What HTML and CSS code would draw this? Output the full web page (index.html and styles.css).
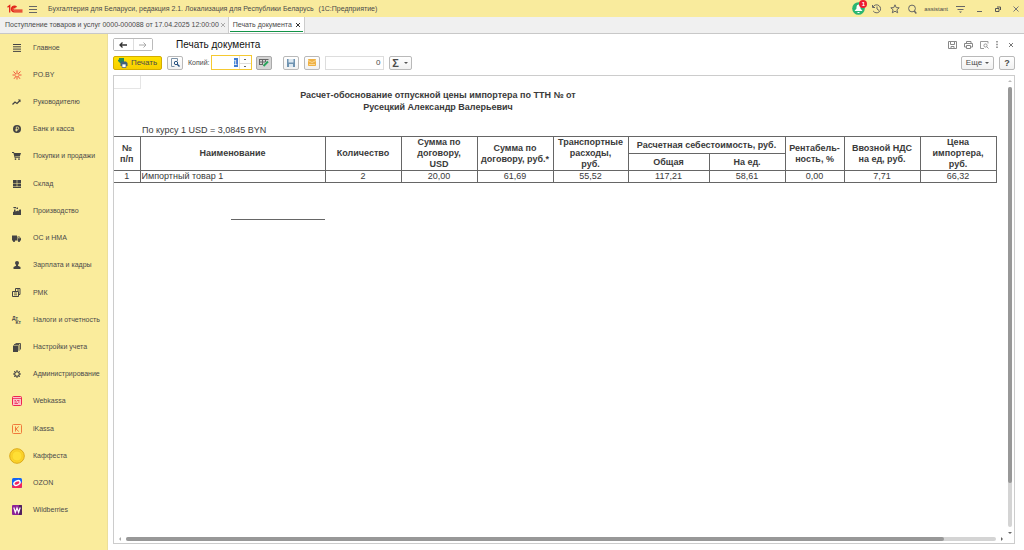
FILE: index.html
```html
<!DOCTYPE html>
<html lang="ru">
<head>
<meta charset="utf-8">
<title>Печать документа</title>
<link rel="stylesheet" href="styles.css">
</head>
<body>
<div class="app">
  <header class="titlebar">
    <svg class="logo" width="16" height="10" viewBox="0 0 16 10" fill="none" stroke="#e2231a"><path d="M.5 3.200 2.700 1.500V8.500M9.600 3.200A2.900 2.900 0 1 0 7 7.900H15.500M8.300 4.200A1.300 1.300 0 1 0 7.200 6.100H15.500" stroke-width="1.300"/></svg>
    <button class="plain menu" aria-label="Меню"><svg width="9" height="8" viewBox="0 0 9 8" stroke="#666"><path d="M0 1.500H8M0 4.500H8M0 7.500H8"/></svg></button>
    <span class="app-name">Бухгалтерия для Беларуси, редакция 2.1. Локализация для Республики Беларусь</span>
    <span class="platform">(1С:Предприятие)</span>
    <div class="title-tools">
      <button class="plain bell" aria-label="Уведомления"><svg width="13" height="13" viewBox="0 0 13 13"><circle cx="6.500" cy="6.500" r="6.300" fill="#2bb673"/><path d="M2.500 9 4.500 6.500V5Q4.500 2.500 6.500 2.500T8.500 5V6.500L10.500 9ZM5.500 10H7.500V11H5.500Z" fill="#fff"/></svg><span class="badge">1</span></button>
      <button class="plain t-history" aria-label="История"><svg width="10" height="10" viewBox="0 0 10 10" fill="none" stroke="#666"><path d="M1 3A4 4 0 1 1 1.200 7M.5 1V3.500H3M5 2.500V5L7 6.500"/></svg></button>
      <button class="plain t-star" aria-label="Избранное"><svg width="10" height="10" viewBox="0 0 10 10" fill="none" stroke="#666"><path d="m5 .8 1.200 2.800 3 .2-2.300 2 .8 3L5 7.200 2.300 8.800l.8-3L.8 3.800l3-.2Z"/></svg></button>
      <button class="plain t-search" aria-label="Поиск"><svg width="9" height="10" viewBox="0 0 9 10" fill="none" stroke="#666"><circle cx="4" cy="4.500" r="3.400"/><path d="m6.300 7 2 2.500" stroke-width="1.400"/></svg></button>
      <span class="user">assistant</span>
      <button class="plain t-set" aria-label="Настройки"><svg width="9" height="8" viewBox="0 0 9 8" stroke="#666"><path d="M0 1.500H9M1.500 4.500H7.500"/><path d="M3 6.500H6L4.500 8Z" fill="#666" stroke="none"/></svg></button>
      <button class="plain t-min" aria-label="Свернуть"><svg width="6" height="8" viewBox="0 0 6 8" stroke="#666"><path d="M0 6.500H5"/></svg></button>
      <button class="plain t-max" aria-label="Развернуть"><svg width="6" height="6" viewBox="0 0 6 6" fill="none" stroke="#555"><path d="M.5 2.500H4V5.500H.5ZM2 1H5.500V4"/></svg></button>
      <button class="plain t-close" aria-label="Закрыть"><svg width="6" height="6" viewBox="0 0 6 6" stroke="#777"><path d="m.5.5 5 5m0-5-5 5"/></svg></button>
    </div>
  </header>

  <nav class="tabs">
    <button class="tab">Поступление товаров и услуг 0000-000088 от 17.04.2025 12:00:00 <svg width="4" height="4" viewBox="0 0 4 4" stroke="#aaa"><path d="m0 0 4 4m0-4-4 4"/></svg></button>
    <button class="tab active">Печать документа <svg width="4" height="4" viewBox="0 0 4 4" stroke="#333"><path d="m0 0 4 4m0-4-4 4"/></svg></button>
  </nav>

  <div class="body">
    <nav class="sidebar">
      <a class="item" href="#"><span class="ico"><svg width="8" height="8" viewBox="0 0 8 8" stroke="#444"><path d="M0 .500H8M0 2.800H8M0 5.100H8M0 7.400H8"/></svg></span>Главное</a>
      <a class="item" href="#"><span class="ico"><svg width="10" height="10" viewBox="0 0 10 10" stroke="#f0563a"><path d="M5 .5V4M5 6V9.500M1.500 1.500 4 4.200M8.500 1.500 6 4.200M.5 5H3.800M6.200 5H9.500M2 8.800 4.200 6M8 8.800 5.800 6"/></svg></span>PO.BY</a>
      <a class="item" href="#"><span class="ico"><svg width="9" height="7" viewBox="0 0 9 7" fill="none" stroke="#444"><path d="M.5 5.500 3 3 5 4.500 8 1.500" stroke-width="1.300"/><path d="M5.800.5H8.500V3.200Z" fill="#444" stroke="none"/></svg></span>Руководителю</a>
      <a class="item" href="#"><span class="ico"><svg width="8" height="8" viewBox="0 0 8 8"><circle cx="4" cy="4" r="4" fill="#444"/><path d="M3.300 6.500V2H4.500A1.200 1.200 0 0 1 4.500 4.500H2.500M2.500 5.500H4.500" fill="none" stroke="#faec9c" stroke-width=".8"/></svg></span>Банк и касса</a>
      <a class="item" href="#"><span class="ico"><svg width="9" height="8" viewBox="0 0 9 8" fill="#444"><path d="M0 0H2L2.300 1H9L7.800 4.500H3.200L3.400 5.200H8V6H2.700L1.400.9H0Z"/><circle cx="3.500" cy="7.100" r=".9"/><circle cx="7" cy="7.100" r=".9"/></svg></span>Покупки и продажи</a>
      <a class="item" href="#"><span class="ico"><svg width="8" height="8" viewBox="0 0 8 8" fill="#444"><path d="M0 0H3.700V3.400H0ZM4.300 0H8V3.400H4.300ZM0 3.900H3.700V6.500H0ZM4.300 3.900H8V6.500H4.300ZM0 7H8V8H0Z"/></svg></span>Склад</a>
      <a class="item" href="#"><span class="ico"><svg width="8" height="8" viewBox="0 0 8 8" fill="#444"><path d="M0 8V5L1 4.500V2.500H2.500V4.500L5 3.500V4.500L6.500 2.500H8V8ZM0 0H3V1.300H1ZM3.500 .5H5V2H3.500Z"/></svg></span>Производство</a>
      <a class="item" href="#"><span class="ico"><svg width="9" height="7" viewBox="0 0 9 7" fill="#444"><path d="M0 .5H5V5.500H0ZM5.500 1.500H7.500L9 3.500V5.500H5.500Z"/><circle cx="2" cy="5.700" r="1.200"/><circle cx="7" cy="5.700" r="1.200"/><path d="M6.200 2.200H7.300L8 3.300H6.200Z" fill="#faec9c"/></svg></span>ОС и НМА</a>
      <a class="item" href="#"><span class="ico"><svg width="8" height="8" viewBox="0 0 8 8" fill="#444"><circle cx="4" cy="2" r="2"/><path d="M3 3H5V4.800L7.500 6V8H.5V6L3 4.800Z"/></svg></span>Зарплата и кадры</a>
      <a class="item" href="#"><span class="ico"><svg width="9" height="9" viewBox="0 0 9 9" fill="none" stroke="#444"><path d="M.5 3.500H6.500V8.500H.5ZM3.500 3V.5H8V6.500H7M5 2H7"/><path d="M2 5H5M2 6.800H5" stroke-width=".8"/></svg></span>РМК</a>
      <a class="item" href="#"><span class="ico"><span class="dtkt"><span>Дт</span><span>Кт</span></span></span>Налоги и отчетность</a>
      <a class="item" href="#"><span class="ico"><svg width="8" height="9" viewBox="0 0 8 9" fill="#444"><path d="M0 2.500H5V9H0Z"/><path d="M1 1.500H6V7.800M2.500.5H7.500V6.500" fill="none" stroke="#444" stroke-width=".9"/></svg></span>Настройки учета</a>
      <a class="item" href="#"><span class="ico"><svg width="8" height="8" viewBox="0 0 8 8" fill="none" stroke="#444"><circle cx="4" cy="4" r="2.300" stroke-width="1.100"/><path d="M4 0V1.500M4 6.500V8M0 4H1.500M6.500 4H8M1.200 1.200 2.200 2.200M5.800 5.800 6.800 6.800M1.200 6.800 2.200 5.800M5.800 2.200 6.800 1.200"/></svg></span>Администрирование</a>
      <a class="item" href="#"><span class="ico"><svg width="10" height="10" viewBox="0 0 10 10"><rect x=".5" y=".5" width="9" height="9" rx="1" fill="#fbc3ca" stroke="#ee2450"/><path d="M1 2.500H9M2.500 4.500H4M5 4.500H7.500M2.500 6H5M6 6H7.500M2.500 7.500H6" stroke="#ee2450" stroke-width=".8"/></svg></span>Webkassa</a>
      <a class="item" href="#"><span class="ico"><svg width="10" height="10" viewBox="0 0 10 10" fill="none" stroke="#f07a3c"><rect x=".5" y=".5" width="9" height="9" rx="1"/><path d="M3.500 2.500V7.500M6.800 2.500 4 5 6.800 7.500"/></svg></span>iKassa</a>
      <a class="item" href="#"><span class="ico"><svg width="16" height="16" viewBox="0 0 16 16"><circle cx="8" cy="8" r="7.300" fill="#fbd32c" stroke="#dba91a"/><circle cx="8" cy="8" r="5" fill="#ffdf35" stroke="#f3c41f" stroke-width=".6"/></svg></span>Каффеста</a>
      <a class="item" href="#"><span class="ico"><svg width="10" height="10" viewBox="0 0 10 10"><rect width="10" height="10" rx="1.500" fill="#1264f5"/><path d="M0 7Q5 10 10 4V8.500Q10 10 8.500 10H1.500Q0 10 0 8.500Z" fill="#f3265c"/><ellipse cx="5" cy="5" rx="3.300" ry="2" transform="rotate(-25 5 5)" fill="#f3265c" stroke="#fff" stroke-width="1.400"/></svg></span>OZON</a>
      <a class="item" href="#"><span class="ico"><svg width="10" height="10" viewBox="0 0 10 10"><rect width="10" height="10" rx="1" fill="#8c2396"/><path d="M7 0H9Q10 0 10 1V9Q10 10 9 10H7Z" fill="#51205f"/><path d="m1.800 2.500 1.500 5L5 3l1.700 4.500 1.500-5" fill="none" stroke="#fff" stroke-width="1.200"/></svg></span>Wildberries</a>
    </nav>

    <main class="main">
      <div class="heading">
        <div class="nav-pair">
          <button aria-label="Назад"><svg width="8" height="6" viewBox="0 0 8 6" fill="none" stroke="#333" stroke-width="1.300"><path d="M8 3H1M3.500.5 1 3 3.500 5.500"/></svg></button>
          <button aria-label="Вперед"><svg width="8" height="6" viewBox="0 0 8 6" fill="none" stroke="#aaa"><path d="M0 3H7M4.500.5 7 3 4.500 5.500"/></svg></button>
        </div>
        <h1>Печать документа</h1>
        <div class="window-tools">
          <button class="plain" aria-label="Сохранить"><svg width="9" height="8" viewBox="0 0 9 8" fill="none" stroke="#888"><path d="M.5.5H8.500V7.500H.5ZM2.500.5V3.500H6.500V.5M3 7V5.500H6V7"/></svg></button>
          <button class="plain" aria-label="Печать"><svg width="9" height="8" viewBox="0 0 9 8" fill="none" stroke="#888"><path d="M2.500 2.500V.5H7V2.500M2 6H.5V2.500H8.500V6H7M2.500 4.500H6.500V7.500H2.500Z"/></svg></button>
          <button class="plain" aria-label="Просмотр"><svg width="9" height="8" viewBox="0 0 9 8" fill="none" stroke="#999"><path d="M4 7.500H.5V.5H8V2.500"/><circle cx="5.500" cy="4.500" r="1.600"/><path d="m6.500 5.500 2 2"/></svg></button>
          <button class="plain" aria-label="Еще"><svg width="2" height="7" viewBox="0 0 2 7" fill="#777"><path d="M.3 0H1.700V1.500H.3ZM.3 2.700H1.700V4.200H.3ZM.3 5.400H1.700V6.900H.3Z"/></svg></button>
          <button class="plain last" aria-label="Закрыть"><svg width="4" height="4" viewBox="0 0 4 4" stroke="#777"><path d="m0 0 4 4m0-4-4 4"/></svg></button>
        </div>
      </div>

      <div class="toolbar">
        <button class="btn primary"><svg width="10" height="10" viewBox="0 0 10 10"><path d="M1 0H6V4H1Z" fill="#288b55"/><path d="M2.500 3.500H8L9.500 5V8H2.500Z" fill="#42617b"/><path d="M4 6H8V9.500H4Z" fill="#fff" stroke="#42617b" stroke-width=".7"/><path d="m0 2 3 3" stroke="#288b55" stroke-width="1.500"/></svg>Печать</button>
        <button class="btn icon preview" aria-label="Просмотр"><svg width="9" height="9" viewBox="0 0 9 9" fill="none" stroke="#7c93a8"><path d="M3.500 8.500H.5V.5H6.500V3"/><circle cx="5" cy="5" r="1.700" stroke="#234f7d"/><path d="m6.200 6.200 2.300 2.300" stroke="#234f7d" stroke-width="1.400"/></svg></button>
        <label class="copies-label" for="copies">Копий:</label>
        <div class="copies"><input id="copies" type="text" value="1"><span class="spin"><button class="plain" aria-label="Больше"></button><button class="plain" aria-label="Меньше"></button></span></div>
        <button class="btn icon pressed" aria-label="Редактирование"><svg width="10" height="9" viewBox="0 0 10 9" fill="none" stroke="#666"><path d="M0 1.500H9.500M.5 4H6M.5 6.500H4M.5 1V7M3.500 1V7M6.500 1V4" /><path d="M4.500 8 9 3.500" stroke="#28a35b" stroke-width="2"/></svg></button>
        <button class="btn icon save" aria-label="Сохранить"><svg width="8" height="8" viewBox="0 0 8 8"><path d="M0 0H8V8H0Z" fill="#6f93b1"/><path d="M1.500 0H6.500V3.500H1.500ZM2 5H6V8H2Z" fill="#dce8f1"/></svg></button>
        <button class="btn icon" aria-label="Отправить"><svg width="8" height="7" viewBox="0 0 8 7"><rect width="8" height="7" rx=".7" fill="#efb144"/><path d="M0 1.500 4 3.500 8 1.500M1 5.500H7" fill="none" stroke="#fbe2ae" stroke-width=".8"/></svg></button>
        <input class="sum" type="text" value="0" aria-label="Сумма" readonly>
        <button class="btn sigma"><b>Σ</b><i class="caret"></i></button>
        <button class="btn more">Еще<i class="caret"></i></button>
        <button class="btn help">?</button>
      </div>

      <section class="sheet">
        <div class="doc">
          <div class="first-cell"></div>
          <h2>Расчет-обоснование отпускной цены импортера по ТТН № от<br>Русецкий Александр Валерьевич</h2>
          <p class="rate">По курсу 1 USD = 3,0845 BYN</p>
          <table>
            <colgroup><col class="c-num"><col class="c-name"><col class="c-std"><col class="c-std"><col class="c-std"><col class="c-trans"><col class="c-total"><col class="c-std"><col class="c-rent"><col class="c-std"><col class="c-std"></colgroup>
            <thead>
              <tr><th rowspan="2">№<br>п/п</th><th rowspan="2">Наименование</th><th rowspan="2">Количество</th><th rowspan="2">Сумма по<br>договору,<br>USD</th><th rowspan="2">Сумма по<br>договору, руб.*</th><th rowspan="2">Транспортные<br>расходы,<br>руб.</th><th colspan="2">Расчетная себестоимость, руб.</th><th rowspan="2">Рентабель-<br>ность, %</th><th rowspan="2">Ввозной НДС<br>на ед, руб.</th><th rowspan="2">Цена<br>импортера,<br>руб.</th></tr>
              <tr><th>Общая</th><th>На ед.</th></tr>
            </thead>
            <tbody>
              <tr><td>1</td><td class="left">Импортный товар 1</td><td>2</td><td>20,00</td><td>61,69</td><td>55,52</td><td>117,21</td><td>58,61</td><td>0,00</td><td>7,71</td><td>66,32</td></tr>
            </tbody>
          </table>
          <div class="signature"></div>
        </div>
        <div class="vbar"><i class="arrow up"></i><div class="track"><div class="thumb"></div></div><i class="arrow down"></i></div>
        <div class="hbar"><i class="arrow left-arrow"></i><div class="track"><div class="thumb"></div></div><i class="arrow right-arrow"></i></div>
      </section>
    </main>
  </div>
</div>
</body>
</html>
```

FILE: styles.css
```css
* { box-sizing: border-box; }
body { margin: 0; font: 7px/10px "Liberation Sans", Arial, sans-serif; color: #4a4a4a; background: #fff; }
button, input { font: inherit; color: inherit; margin: 0; padding: 0; }
svg { display: block; flex: none; }
.app { display: flex; flex-direction: column; height: 100vh; }
.plain { border: 0; background: none; display: flex; align-items: center; justify-content: center; }

.titlebar { flex: none; height: 17px; display: flex; align-items: center; background: #f9eb9d; padding: 0 5px 0 7px; }
.menu { margin: 0 10px 0 6px; }
.app-name, .platform { white-space: nowrap; }
.platform { margin-left: 5px; }
.title-tools { margin-left: auto; display: flex; align-items: center; }
.bell { position: relative; margin-right: 7px; }
.badge { position: absolute; top: -2px; right: -2px; width: 8px; height: 8px; border-radius: 50%; background: #ee1c2e; color: #fff; font: bold 6px/8px "Liberation Sans", Arial, sans-serif; text-align: center; }
.t-history, .t-star { margin-right: 8px; }
.t-search { margin-right: 7px; }
.user { font-size: 6px; margin-right: 8px; }
.t-set { margin-right: 12px; }
.t-min, .t-max { margin-right: 12px; }

.tabs { flex: none; height: 17px; display: flex; background: #f0f0f0; border-bottom: 1px solid #c8c8c8; }
.tab { display: flex; align-items: center; gap: 2px; border: 0; border-right: 1px solid #ccc; background: none; padding: 0 3px 0 5px; white-space: nowrap; }
.tab.active { position: relative; background: #fff; gap: 4px; padding: 0 4px; }
.tab.active::after { content: ""; position: absolute; left: 1px; right: 1px; bottom: 1px; height: 1px; background: #139347; }

.body { flex: 1; min-height: 0; display: flex; }
.sidebar { flex: none; width: 108px; background: #faec9c; border-right: 1px solid #ecdf9a; display: flex; flex-direction: column; padding-bottom: 26px; }
.item { flex: 1; display: flex; align-items: center; color: #4a4a4a; text-decoration: none; white-space: nowrap; }
.ico { width: 33px; display: flex; justify-content: center; flex: none; }
.dtkt { display: flex; flex-direction: column; width: 9px; font: bold 5px/4px "Liberation Sans", Arial, sans-serif; }
.dtkt span:last-child { text-align: right; }

.main { flex: 1; min-width: 0; display: flex; flex-direction: column; padding: 4px 9px 6px 5px; }
.heading { display: flex; align-items: center; height: 13px; }
.nav-pair { display: flex; width: 40px; height: 13px; border: 1px solid #bbb; border-radius: 2px; }
.nav-pair button { flex: 1; display: flex; align-items: center; justify-content: center; border: 0; background: #fff; }
.nav-pair button + button { border-left: 1px solid #ddd; }
h1 { margin: 0 0 0 23px; font-size: 10px; line-height: 13px; font-weight: normal; color: #111; }
.window-tools { margin-left: auto; display: flex; align-items: center; gap: 7px; padding-right: 2px; }
.window-tools .last { margin-left: 4px; }

.toolbar { display: flex; align-items: center; margin-top: 4px; height: 15px; flex: none; }
.btn { display: flex; align-items: center; justify-content: center; height: 14px; border: 1px solid #b9b9b9; border-radius: 2px; background: linear-gradient(#fff, #f1f1f1); }
.primary { width: 49px; gap: 3px; border-color: #d3ac00; background: linear-gradient(#ffe100, #f7cf00); font-size: 8px; }
.icon { width: 16px; }
.preview { margin-left: 5px; }
.copies-label { margin-left: 5px; }
.copies { display: flex; width: 41px; height: 15px; margin: 0 4px 0 1px; border: 1px solid #f5c932; background: #fff; }
.copies input { flex: 1; min-width: 0; border: 0; outline: 0; text-align: right; font-size: 8px; color: #fff; background: linear-gradient(#3f7bd0, #3f7bd0) right center / 4px 9px no-repeat; }
.spin { width: 12px; display: grid; grid-template-rows: 1fr 1fr; margin-left: 1px; border-left: 1px solid #ddd; }
.spin button + button { border-top: 1px solid #ddd; }
.spin button::before { content: ""; width: 2px; height: 1px; background: #666; }
.pressed { background: #d5d5d5; border-color: #aaa; }
.save { margin: 0 5px 0 11px; }
.sum { width: 59px; height: 14px; margin: 0 5px; border: 1px solid #ddd; padding-right: 2px; text-align: right; font-size: 8px; }
.sigma { width: 23px; gap: 5px; font-size: 11px; }
.caret { border: 2px solid transparent; border-top-color: #555; border-bottom: 0; }
.more { margin-left: auto; margin-right: 5px; width: 33px; gap: 3px; font-size: 8px; }
.help { width: 16px; font-size: 9px; font-weight: bold; }

.sheet { flex: 1; min-height: 0; margin-top: 5px; border: 1px solid #ccc; display: grid; grid-template-columns: 1fr 8px; grid-template-rows: 1fr 8px; }
.doc { overflow: hidden; padding-right: 10px; font-size: 9px; line-height: 11px; color: #3a3a3a; }
.first-cell { width: 27px; height: 13px; border: solid #e5e5e5; border-width: 0 1px 1px 0; }
h2 { margin: 0; width: 648px; font-size: 9px; line-height: 12px; text-align: center; }
.rate { margin: 12px 0 0 28px; line-height: 11px; }
table { width: 882px; border-collapse: collapse; table-layout: fixed; }
.c-num { width: 26px; }
.c-name { width: 185px; }
.c-std { width: 76px; }
.c-trans { width: 75px; }
.c-total { width: 81px; }
.c-rent { width: 59px; }
th, td { border: 1px solid #666; padding: 0; text-align: center; white-space: nowrap; }
th { height: 17px; }
td { height: 12px; }
td.left { text-align: left; padding-left: 1px; }
table tr > :first-child[rowspan], tbody td:first-child { border-left-width: 0; }
.signature { width: 94px; margin: 36px 0 0 117px; border-top: 1px solid #666; }

.vbar { display: flex; flex-direction: column; align-items: center; gap: 5px; padding: 4px 0 1px; }
.hbar { display: flex; align-items: center; gap: 5px; padding: 0 3px 0 5px; }
.track { flex: 1; background: #d4d4d4; border-radius: 2px; }
.vbar .track { width: 4px; }
.hbar .track { height: 4px; }
.thumb { background: #989898; border-radius: 2px; }
.vbar .thumb { height: 90%; width: 4px; }
.hbar .thumb { width: 94%; height: 4px; }
.arrow { border: 2px solid transparent; }
.up { border-bottom-color: #bbb; border-top: 0; }
.down { border-top-color: #666; border-bottom: 0; }
.left-arrow { border-right-color: #aaa; border-left: 0; }
.right-arrow { border-left-color: #666; border-right: 0; }
```
